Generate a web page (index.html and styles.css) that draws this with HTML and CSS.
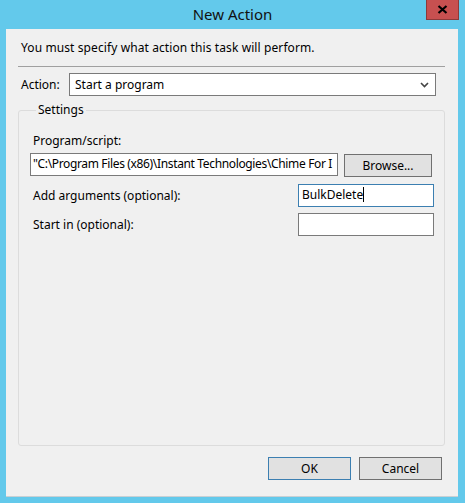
FILE: index.html
```html
<!DOCTYPE html>
<html>
<head>
<meta charset="utf-8">
<link rel="stylesheet" href="styles.css">
</head>
<body>
<div class="window">
  <div class="titlebar">
    <span class="title">New Action</span>
    <div class="close"><svg width="11" height="9" viewBox="0 0 11 9"><path d="M1.5 1 L9.5 8 M9.5 1 L1.5 8" stroke="#000" stroke-width="2.2" fill="none"/></svg></div>
  </div>
  <div class="client">
    <p class="intro">You must specify what action this task will perform.</p>
    <div class="sep"></div>
    <div class="action-row">
      <span class="action-label">Action:</span>
      <div class="combo">
        <span>Start a program</span>
        <svg class="chev" width="9" height="6" viewBox="0 0 9 6"><path d="M1 1 L4.5 4.5 L8 1" stroke="#444" stroke-width="1.6" fill="none"/></svg>
      </div>
    </div>
    <fieldset class="settings">
      <legend>Settings</legend>
      <div class="field-label prog-label">Program/script:</div>
      <div class="prog-row">
        <div class="textbox prog">"C:\Program Files (x86)\Instant Technologies\Chime For I</div>
        <div class="btn browse">Browse...</div>
      </div>
      <div class="arg-row first">
        <span class="field-label">Add arguments (optional):</span>
        <div class="textbox small focused">BulkDelete<span class="caret"></span></div>
      </div>
      <div class="arg-row second">
        <span class="field-label">Start in (optional):</span>
        <div class="textbox small"></div>
      </div>
    </fieldset>
    <div class="buttons">
      <div class="btn ok">OK</div>
      <div class="btn">Cancel</div>
    </div>
  </div>
</div>
</body>
</html>
```

FILE: styles.css
```css
html, body {
  margin: 0;
  padding: 0;
}
body {
  background: #63c9eb;
  font-family: "Noto Sans", "Open Sans", sans-serif;
  font-size: 12px;
  color: #000;
  width: 465px;
  height: 503px;
  overflow: hidden;
}
.window {
  display: flex;
  flex-direction: column;
}
.titlebar {
  height: 29px;
  display: flex;
  align-items: flex-start;
  position: relative;
}
.title {
  flex: 1;
  text-align: center;
  font-size: 15px;
  line-height: 20px;
  padding-top: 4px;
  color: #111;
}
.close {
  position: absolute;
  right: 6px;
  top: 0;
  width: 31px;
  height: 19px;
  background: #c75050;
  border: 1px solid #8c3a3a;
  border-top: none;
  display: flex;
  align-items: center;
  justify-content: center;
}
.client {
  margin: 0 7px 0 6px;
  height: 468px;
  background: #f0f0f0;
  display: flex;
  flex-direction: column;
  box-sizing: border-box;
  border-bottom: 1px solid #c8d0d4;
}
.intro {
  margin: 0;
  padding: 11px 0 0 15px;
  line-height: 16px;
  letter-spacing: 0.1px;
}
.sep {
  margin: 10px 13px 0 12px;
  height: 1px;
  background: #a0a0a0;
}
.action-row {
  margin: 6px 22px 0 15px;
  display: flex;
  align-items: center;
}
.action-label {
  width: 48px;
}
.combo {
  flex: 1;
  height: 23px;
  box-sizing: border-box;
  border: 1px solid #7a7a7a;
  background: #fff;
  display: flex;
  align-items: center;
  justify-content: space-between;
  padding: 0 6px 0 5px;
}
.settings {
  margin: 6px 13px 0 12px;
  padding: 0 11px 0 11px;
  border: 1px solid #dcdcdc;
  border-radius: 3px;
  height: 344px;
  box-sizing: border-box;
  min-width: 0;
}
.settings legend {
  margin-left: 6px;
  padding: 0 2px;
  line-height: 16px;
}
.field-label {
  padding-left: 3px;
  line-height: 16px;
}
.prog-label {
  margin-top: 15px;
}
.prog-row {
  margin-top: 4px;
  display: flex;
  align-items: flex-start;
}
.textbox {
  box-sizing: border-box;
  height: 23px;
  border: 1px solid #7a7a7a;
  background: #fff;
  line-height: 20px;
  padding: 0 3px;
  white-space: nowrap;
  overflow: hidden;
}
.textbox.prog {
  width: 308px;
  padding: 0 2px;
  letter-spacing: -0.35px;
}
.btn {
  box-sizing: border-box;
  height: 23px;
  width: 83px;
  background: #e1e1e1;
  border: 1px solid #707070;
  text-align: center;
  line-height: 21px;
}
.browse {
  margin-left: 6px;
  margin-top: 1px;
  width: 88px;
}
.arg-row {
  display: flex;
  align-items: center;
  justify-content: space-between;
  margin-right: -1px;
}
.arg-row.first {
  margin-top: 7px;
}
.arg-row.second {
  margin-top: 6px;
}
.textbox.small {
  width: 136px;
}
.focused {
  border-color: #3c7fb1;
}
.caret {
  display: inline-block;
  width: 1px;
  height: 15px;
  background: #000;
  vertical-align: -3px;
}
.buttons {
  margin: 11px 16px 0 0;
  display: flex;
  justify-content: flex-end;
  gap: 8px;
}
.ok {
  border-color: #3c7fb1;
}
```
